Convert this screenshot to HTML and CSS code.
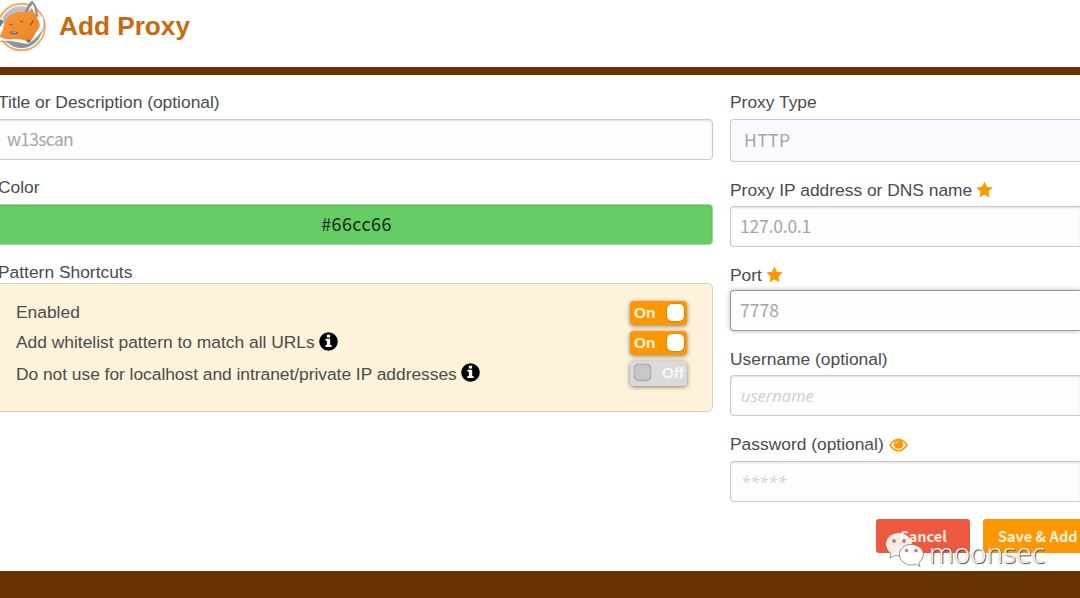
FILE: index.html
```html
<!DOCTYPE html>
<html lang="en">
<head>
<meta charset="utf-8">
<title>Add Proxy</title>
<link rel="stylesheet" href="styles.css">
</head>
<body>
<svg class="sprite-defs" width="0" height="0" aria-hidden="true">
  <symbol id="star" viewBox="0 0 24 24"><path d="M12 0.8l3.5 7.3 8 1.1-5.8 5.6 1.4 8L12 19l-7.1 3.8 1.4-8L.5 9.2l8-1.1z"/></symbol>
  <symbol id="info" viewBox="0 0 20 20"><circle cx="10" cy="10" r="9.8"/><path fill="#fff" d="M8.3 3h3.4v2.7H8.3zM6.8 7.2h5v6.6h1.5v2.1H6.8v-2.1h1.5V9.3H6.8z"/></symbol>
</svg>
<header class="header">
  <svg class="logo" viewBox="0 0 48 54">
    <defs>
      <linearGradient id="disc" x1="0" y1="0" x2="0" y2="1"><stop offset="0" stop-color="#c4c6ca"/><stop offset="1" stop-color="#8b9098"/></linearGradient>
      <linearGradient id="fur" x1="0" y1="0" x2="1" y2="1"><stop offset="0" stop-color="#f59b42"/><stop offset="1" stop-color="#f0811f"/></linearGradient>
    </defs>
    <circle cx="21.500" cy="28" r="23.300" fill="#fff" stroke="#f5a968" stroke-width="2"/>
    <circle cx="21.500" cy="28" r="21" fill="url(#disc)"/>
    <path d="M0 41Q14 42 28 45Q40 37 43.500 28Q44.500 22 42.500 18L36 17L30 38L0 38z" fill="#fff"/>
    <path d="M0 19Q3 19 4.500 22.500L3 32L0 35z" fill="#fff"/>
    <path d="M0 20.500Q2.500 20.500 4 22.500L0 28z" fill="#777b83"/>
    <path d="M24 15Q27 6 32 1.500Q36 5 37.500 12Q37.800 16 37 21L27 19z" fill="#8b8e95"/>
    <path d="M27.500 14Q29.500 8 32.500 5Q35 8 35.500 15L33 18z" fill="#fff"/>
    <path d="M0 38Q4 30 4.500 22Q9 15 18 13Q25 12.500 28 13.500L31.500 9Q35 14 36 18Q40.500 23 39.500 28Q35 34 32 40.500Q30 43.500 27.500 42.500Q22 39.500 13 40Q5 41 0 38z" fill="url(#fur)"/>
    <path d="M9.500 34Q13 30 18.500 34Q15 36 12 35z" fill="#5d646d"/>
    <path d="M12 33.500q2-1.200 4 0" fill="none" stroke="#e6e9ec" stroke-width=".8"/>
    <path d="M9.500 26q1.500-1.500 3 .3M30 26q3-2 3-5M20 22.500q1.500-.5 3 .5" fill="none" stroke="#a9561c" stroke-width="1.300"/>
    <circle cx="28.500" cy="42" r="1.800" fill="#6a6e76"/>
    <path d="M0 42.500Q14 43 28 46Q41 38 44 28V20" fill="none" stroke="#8b8e95" stroke-width=".7"/>
  </svg>
  <h1 class="title">Add Proxy</h1>
</header>
<main class="form">
  <section class="column">
    <div class="label">Title or Description (optional)</div>
    <div class="input input-title">w13scan</div>
    <div class="label">Color</div>
    <div class="input color">#66cc66</div>
    <div class="label label-tight">Pattern Shortcuts</div>
    <div class="panel">
      <div class="row"><span>Enabled</span><span class="toggle">On<i class="knob"></i></span></div>
      <div class="row"><span>Add whitelist pattern to match all URLs</span><svg class="info"><use href="#info"/></svg><span class="toggle">On<i class="knob"></i></span></div>
      <div class="row row-last"><span>Do not use for localhost and intranet/private IP addresses</span><svg class="info"><use href="#info"/></svg><span class="toggle off"><i class="knob"></i>Off</span></div>
    </div>
  </section>
  <section class="column column-right">
    <div class="label">Proxy Type</div>
    <div class="input select">HTTP</div>
    <div class="label label-low">Proxy IP address or DNS name<svg class="star"><use href="#star"/></svg></div>
    <div class="input address">127.0.0.1</div>
    <div class="label label-low label-port">Port<svg class="star"><use href="#star"/></svg></div>
    <div class="input focus">7778</div>
    <div class="label label-low">Username (optional)</div>
    <div class="input hint">username</div>
    <div class="label">Password (optional)<svg class="eye" viewBox="0 0 20 14"><path fill="none" stroke="#ff9800" stroke-width="1.700" d="M1 7Q5 1 10 1Q15 1 19 7Q15 13 10 13Q5 13 1 7z"/><circle cx="10" cy="6" r="5" fill="#ff9800"/><path fill="none" stroke="#fff" d="M7.200 6Q7.200 3.400 10 3.200"/></svg></div>
    <div class="input hint stars">*****</div>
    <div class="actions"><button class="button cancel">Cancel</button><button class="button save">Save &amp; Add</button></div>
  </section>
</main>
<footer class="footer"></footer>
<div class="watermark">
  <svg class="wechat" viewBox="0 0 40 36">
    <path d="M14 1C6.500 1 1 6 1 12.500C1 16.500 3 19.500 6 21.500L5 26L10 23.500Q15 25 19 23Q28 20 27 12C26 5 20.500 1 14 1z" fill="#fff" fill-opacity=".88"/>
    <path d="M1 14C1.500 17.500 3 19.500 6 21.500L5 26L10 23.500L15 24" fill="none" stroke="#777" stroke-width=".8"/>
    <path d="M26 12.500C19.500 12.500 14.500 17 14.500 22.500C14.500 29 20.500 33 26 33Q28.500 33 31 32L35 34.500L34 30.500Q38.500 27 38.500 22.500C38.500 17 33 12.500 26 12.500z" fill="#fff" fill-opacity=".93" stroke="#777" stroke-width=".8"/>
    <g fill="#dc7465" stroke="#777" stroke-width=".4"><circle cx="9" cy="9" r="1.700"/><circle cx="19" cy="9" r="1.700"/><circle cx="21.500" cy="18.500" r="1.500"/><circle cx="31" cy="18.500" r="1.500"/></g>
  </svg>
  <span>moonsec</span>
</div>
</body>
</html>
```
FILE: styles.css
```css
* { box-sizing: border-box; }
body {
  margin: 0;
  width: 1080px;
  height: 598px;
  overflow: hidden;
  display: flex;
  flex-direction: column;
  position: relative;
  background: #fff;
  color: #4a4b4d;
  font: 17.4px/19px "Liberation Sans", Arial, sans-serif;
}
.sprite-defs { display: none; }
.header {
  height: 75px;
  flex: none;
  display: flex;
  align-items: flex-start;
  border-bottom: 8px solid #663300;
}
.logo { width: 48px; height: 54px; margin-top: -1px; }
.title { margin: 9px 0 0 11px; font-size: 26.2px; line-height: 34px; font-weight: bold; color: #c9690d; }
.form {
  flex: 1;
  display: grid;
  grid-template-columns: 717px 350px;
  column-gap: 17px;
  margin-left: -4px;
  padding-top: 18px;
}
.label { height: 26px; padding-left: 2px; white-space: nowrap; }
.label-tight { height: 20px; }
.label-low { padding-top: 1px; }
.label-port { padding-top: 2px; }
.column-right .label { padding-left: 0; }
.input {
  height: 41px;
  margin-bottom: 18px;
  padding: 0 9px 2px;
  display: flex;
  align-items: center;
  border: 1px solid #c9c9c9;
  border-radius: 4px;
  background: #fdfdfd;
  box-shadow: inset 0 1px 2px rgba(0, 0, 0, .12);
  color: #a5a5a5;
  font-family: "Noto Sans CJK SC", sans-serif;
  font-size: 17.5px;
}
.column-right .input { border-right: 0; border-top-right-radius: 0; border-bottom-right-radius: 0; }
.input-title { padding-left: 10px; letter-spacing: -.7px; }
.color {
  justify-content: center;
  padding-left: 13px;
  background: #66cc66;
  border-color: #a6d6a3;
  color: #162c16;
  font-size: 18px;
  letter-spacing: .4px;
}
.panel {
  height: 129px;
  padding: 17px 25px 0 19px;
  background: #fff2da;
  border: 1px solid #d8d0c2;
  border-radius: 5px;
}
.row { height: 30px; display: flex; align-items: flex-start; line-height: 23px; white-space: nowrap; }
.row-last { line-height: 26px; letter-spacing: -.03px; }
.info { width: 19px; height: 19px; margin: 1px 0 0 4px; }
.row-last .info { margin-top: 2px; }
.toggle {
  width: 57px;
  height: 24px;
  margin-left: auto;
  padding: 0 3px 1px 4px;
  display: flex;
  align-items: center;
  justify-content: space-between;
  border-radius: 4px;
  background: #ff9800;
  color: #fff4df;
  font-weight: bold;
  font-size: 15.5px;
  box-shadow: 0 1px 4px rgba(0, 0, 0, .5);
}
.knob { width: 17px; height: 17px; border-radius: 5px; background: #fff; box-shadow: 0 0 2px rgba(120, 70, 0, .65); }
.off { height: 25px; padding-bottom: 2px; background: #dadada; color: #f7f7f7; }
.off .knob { background: #c7c7c7; box-shadow: inset 0 0 2px #777, 0 0 1px #777; }
.select { height: 43px; padding: 0 0 2px 13px; background: #f8f9fe; box-shadow: none; letter-spacing: .4px; }
.address { margin-bottom: 17px; letter-spacing: -.2px; }
.focus { border-color: #999; box-shadow: 0 0 5px rgba(0, 0, 0, .3); }
.hint { font-family: "Open Sans", sans-serif; font-style: italic; color: #cfcfcf; font-size: 16.5px; padding: 0 0 0 10px; }
.column-right .hint { margin-bottom: 19px; }
.column-right .stars { margin-bottom: 17px; }
.star { width: 17px; height: 17px; margin-left: 4px; vertical-align: -2px; fill: #ff9800; }
.eye { width: 19px; height: 14px; margin-left: 5px; vertical-align: -2px; }
.actions { display: flex; gap: 13px; padding-left: 146px; }
.button {
  height: 34px;
  padding: 0;
  flex: none;
  border: 0;
  border-radius: 3px;
  color: #fff0dc;
  font: bold 14.5px/20px "Noto Sans CJK SC", sans-serif;
  white-space: nowrap;
}
.cancel { width: 94px; background: #ec5840; }
.save { width: 97px; padding-left: 15px; text-align: left; background: #ff9800; border-radius: 3px 0 0 3px; }
.footer { height: 27px; flex: none; background: #663300; }
.watermark {
  position: absolute;
  left: 885px;
  top: 532px;
  display: flex;
  align-items: flex-start;
  color: #fff;
  font: 300 28px/36px "Open Sans", sans-serif;
  text-shadow: 1px 1px 1px #444, 0 0 1px #888;
}
.watermark span { padding-top: 2px; }
.wechat { width: 40px; height: 36px; margin-right: 4px; }
```
